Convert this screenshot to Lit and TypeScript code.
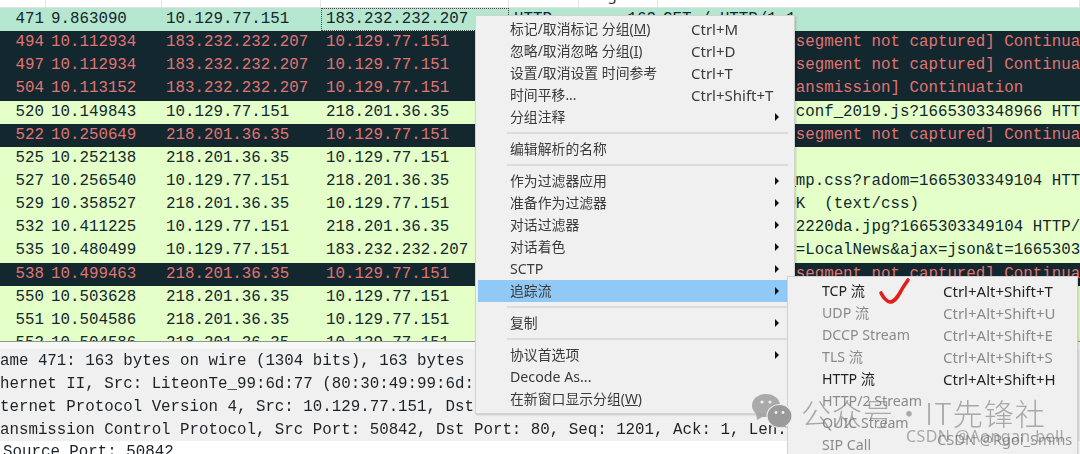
import { LitElement, html, css } from "lit";
import { customElement } from "lit/decorators.js";

type Row = [string, string, string, string, string, string, string, string];
const A = "10.129.77.151", B = "183.232.232.207", C = "218.201.36.35";
const SEG = "[TCP Previous segment not captured] Continuation";
const rows: Row[] = [
  ["s", "471", "9.863090", A, B, "HTTP", "163", "GET / HTTP/1.1"],
  ["d", "494", "10.112934", B, A, "TCP", "1514", SEG],
  ["d", "497", "10.112934", B, A, "TCP", "1514", SEG],
  ["d", "504", "10.113152", B, A, "TCP", "1514", "[TCP Fast Retransmission] Continuation"],
  ["l", "520", "10.149843", A, C, "HTTP", "480", "GET /settings/conf_2019.js?1665303348966 HTTP/1.1"],
  ["d", "522", "10.250649", C, A, "TCP", "1514", SEG],
  ["l", "525", "10.252138", C, A, "TCP", "54", ""],
  ["l", "527", "10.256540", A, C, "HTTP", "470", "GET /css/base_mp.css?radom=1665303349104 HTTP/1.1"],
  ["l", "529", "10.358527", C, A, "HTTP", "815", "HTTP/1.1 200 OK  (text/css)"],
  ["l", "532", "10.411225", A, C, "HTTP", "466", "GET /images/a22220da.jpg?1665303349104 HTTP/1.1"],
  ["l", "535", "10.480499", A, B, "HTTP", "512", "GET /?category=LocalNews&ajax=json&t=1665303349"],
  ["d", "538", "10.499463", C, A, "TCP", "1514", SEG],
  ["l", "550", "10.503628", C, A, "TCP", "1514", ""],
  ["l", "551", "10.504586", C, A, "TCP", "1514", ""],
  ["l", "552", "10.504586", C, A, "TCP", "1514", ""],
];

const details = [
  "Frame 471: 163 bytes on wire (1304 bits), 163 bytes captured (1304 bits) on interface",
  "Ethernet II, Src: LiteonTe_99:6d:77 (80:30:49:99:6d:77), Dst: HuaweiTe",
  "Internet Protocol Version 4, Src: 10.129.77.151, Dst: 183.232.232.207",
  "Transmission Control Protocol, Src Port: 50842, Dst Port: 80, Seq: 1201, Ack: 1, Len: 0",
];

@customElement("app-root")
export class AppRoot extends LitElement {
  static styles = css`
    :host {
      display: block;
      width: 1080px;
      height: 454px;
      position: relative;
      overflow: hidden;
      background: #fff;
      font-family: "Liberation Mono", monospace;
    }
    .page { filter: blur(0.35px); height: 454px; }
    .head {
      height: 8px;
      display: grid;
      grid-template-columns: 46px 116px 159px 188px 70px 79px 1fr;
      overflow: hidden;
      background: #fff;
      box-sizing: border-box;
      border-bottom: 1px solid #e2e2e2;
    }
    .head div { border-right: 1px solid #e4e4e4; }
    .head .hlabel {
      font: 15px "Noto Sans", sans-serif;
      color: #333;
      line-height: 20px;
      margin-top: -16px;
      padding-left: 3px;
      border: 0;
    }
    .table { height: 333px; overflow: hidden; }
    .row {
      height: 23.15px;
      display: grid;
      grid-template-columns: 46px 116px 159px 188px 70px 79px 1fr;
      font-size: 15.8px;
      line-height: 23.15px;
      white-space: pre;
    }
    .row.s { background: #b5e6cf; color: #12272e; }
    .row.d { background: #12272e; color: #e07474; }
    .row.l { background: #e4ffc7; color: #12272e; }
    .row > div { overflow: hidden; }
    .no { text-align: right; padding-right: 2px; }
    .t { padding-left: 5px; }
    .src { padding-left: 4px; }
    .dst { padding-left: 5px; }
    .focus { outline: 1px dotted #444; outline-offset: -1px; }
    .proto { padding-left: 5px; }
    .len { text-align: right; padding-right: 2px; }
    .info { padding-left: 5px; }
    .rule { height: 1px; background: #8c9a8c; }
    .gap { height: 7px; background: #f7f7f7; }
    .details { background: #f0f0f0; height: 92px; padding-top: 1px; box-sizing: border-box; }
    .line {
      height: 23px;
      line-height: 23px;
      font-size: 15.8px;
      color: #1c2226;
      white-space: pre;
      margin-left: -19px;
    }
    .plain {
      background: #fff;
      font-size: 15.8px;
      line-height: 23px;
      color: #1c2226;
      padding: 0 0 0 3px;
      white-space: pre;
    }
    .menu {
      position: absolute;
      background: #f0f0f0;
      border: 1px solid #d2d2d2;
      box-shadow: 1px 1px 2px rgba(0, 0, 0, 0.18);
      box-sizing: border-box;
      font-family: "Noto Sans", "Noto Sans CJK SC", sans-serif;
      font-size: 14.2px;
      color: #3a3a3a;
    }
    .main { left: 475px; top: 15px; width: 320px; height: 399px; padding: 2px 6px 2px 2px; }
    .sub { left: 787px; top: 276px; width: 291px; height: 190px; padding: 3px 2px; }
    .item {
      height: 22px;
      line-height: 22px;
      display: grid;
      align-items: center;
      position: relative;
      white-space: nowrap;
    }
    .main .item { grid-template-columns: 181px 1fr; padding-left: 32px; }
    .sub .item { grid-template-columns: 121px 1fr; padding-left: 32px; }
    .main .item .lbl { font-size: 13.85px; }
    .main .item.lat .lbl { font-size: 14.2px; }
    .sc { font-size: 15px; }
    .item.hl { background: #90c8f6; margin-right: -6px; }
    .item.off { color: #8a8a8a; }
    .sub .item.on { color: #222; }
    .arrow {
      position: absolute;
      left: 297px;
      top: 7px;
      width: 0;
      height: 0;
      border-left: 4px solid #111;
      border-top: 4px solid transparent;
      border-bottom: 4px solid transparent;
    }
    .sep { height: 2px; margin: 4px 0 4px 29px; background: #dcdcdc; }
    .check { position: absolute; left: 875px; top: 276px; }
    .wm { position: absolute; pointer-events: none; }
    .wechat { left: 751px; top: 393px; }
    .wmtext {
      left: 801px;
      top: 390px;
      font: 300 30px "Noto Sans CJK SC", sans-serif;
      line-height: 44px;
      color: rgba(120, 120, 120, 0.6);
      letter-spacing: 1px;
      white-space: pre;
    }
    .csdn1, .csdn2 {
      font-family: "Noto Sans", sans-serif;
      white-space: pre;
      line-height: 20px;
    }
    .csdn1 { left: 906px; top: 426px; font-size: 16px; letter-spacing: 0.4px; color: rgba(110, 110, 110, 0.55); }
    .csdn2 { left: 937px; top: 429px; font-size: 14.6px; color: rgba(100, 100, 100, 0.65); }
  `;

  private menuItem(label: unknown, sc = "", arrow = false, cls = "") {
    return html`<div class="item ${cls}"><span class="lbl">${label}</span><span class="sc">${sc}</span>${arrow ? html`<i class="arrow"></i>` : ""}</div>`;
  }

  render() {
    return html`<div class="page">
      <div class="head">
        <div></div><div></div><div></div><div></div><div></div>
        <div><div class="hlabel">Length</div></div><div></div>
      </div>
      <div class="table">
        ${rows.map(
          (r, i) => html`<div class="row ${r[0]}">
            <div class="no">${r[1]}</div>
            <div class="t">${r[2]}</div>
            <div class="src">${r[3]}</div>
            <div class="dst ${i === 0 ? "focus" : ""}">${r[4]}</div>
            <div class="proto">${r[5]}</div>
            <div class="len">${r[6]}</div>
            <div class="info">${r[7]}</div>
          </div>`
        )}
      </div>
      <div class="rule"></div>
      <div class="gap"></div>
      <div class="details">${details.map((d) => html`<div class="line">${d}</div>`)}</div>
      <div class="plain">Source Port: 50842</div>

      <div class="menu main">
        ${this.menuItem(html`标记/取消标记 分组(<u>M</u>)`, "Ctrl+M")}
        ${this.menuItem(html`忽略/取消忽略 分组(<u>I</u>)`, "Ctrl+D")}
        ${this.menuItem("设置/取消设置 时间参考", "Ctrl+T")}
        ${this.menuItem("时间平移...", "Ctrl+Shift+T")}
        ${this.menuItem("分组注释", "", true)}
        <div class="sep"></div>
        ${this.menuItem("编辑解析的名称")}
        <div class="sep"></div>
        ${this.menuItem("作为过滤器应用", "", true)}
        ${this.menuItem("准备作为过滤器", "", true)}
        ${this.menuItem("对话过滤器", "", true)}
        ${this.menuItem("对话着色", "", true)}
        ${this.menuItem("SCTP", "", true, "lat")}
        ${this.menuItem("追踪流", "", true, "hl")}
        <div class="sep"></div>
        ${this.menuItem("复制", "", true)}
        <div class="sep"></div>
        ${this.menuItem("协议首选项", "", true)}
        ${this.menuItem("Decode As...", "", false, "lat")}
        ${this.menuItem(html`在新窗口显示分组(<u>W</u>)`)}
      </div>

      <div class="menu sub">
        ${this.menuItem("TCP 流", "Ctrl+Alt+Shift+T", false, "on")}
        ${this.menuItem("UDP 流", "Ctrl+Alt+Shift+U", false, "off")}
        ${this.menuItem("DCCP Stream", "Ctrl+Alt+Shift+E", false, "off")}
        ${this.menuItem("TLS 流", "Ctrl+Alt+Shift+S", false, "off")}
        ${this.menuItem("HTTP 流", "Ctrl+Alt+Shift+H", false, "on")}
        ${this.menuItem("HTTP/2 Stream", "", false, "off")}
        ${this.menuItem("QUIC Stream", "", false, "off")}
        ${this.menuItem("SIP Call", "", false, "off")}
      </div>

      <svg class="check" width="36" height="32" viewBox="0 0 36 32" fill="none">
        <path d="M6 17 C8 21 11 25 15 26 C20 26 23 20 26 15 C28 11 31 7 33 4" stroke="#e0201c" stroke-width="3.6" stroke-linecap="round"/>
      </svg>

      <svg class="wm wechat" width="42" height="38" viewBox="0 0 42 38">
        <ellipse cx="15" cy="12.5" rx="14" ry="11.5" fill="#a2a2a2" fill-opacity="0.9"/>
        <path d="M5 20 L6 27 L13 23 Z" fill="#a2a2a2" fill-opacity="0.9"/>
        <ellipse cx="28.5" cy="23" rx="12.5" ry="11.5" fill="#9a9a9a" stroke="#ececec" stroke-width="1.2"/>
        <path d="M33 32 L37 35 L30 33 Z" fill="#9a9a9a"/>
        <circle cx="11" cy="9" r="1.6" fill="#f0f0f0"/><circle cx="19" cy="9" r="1.6" fill="#f0f0f0"/>
        <circle cx="25" cy="19.5" r="1.4" fill="#f0f0f0"/><circle cx="32" cy="19.5" r="1.4" fill="#f0f0f0"/>
      </svg>
      <div class="wm wmtext">公众号·IT先锋社</div>
      <div class="wm csdn1">CSDN @Aongan.bell</div>
      <div class="wm csdn2">CSDN @Rgoi_Smms</div>
    </div>`;
  }
}
